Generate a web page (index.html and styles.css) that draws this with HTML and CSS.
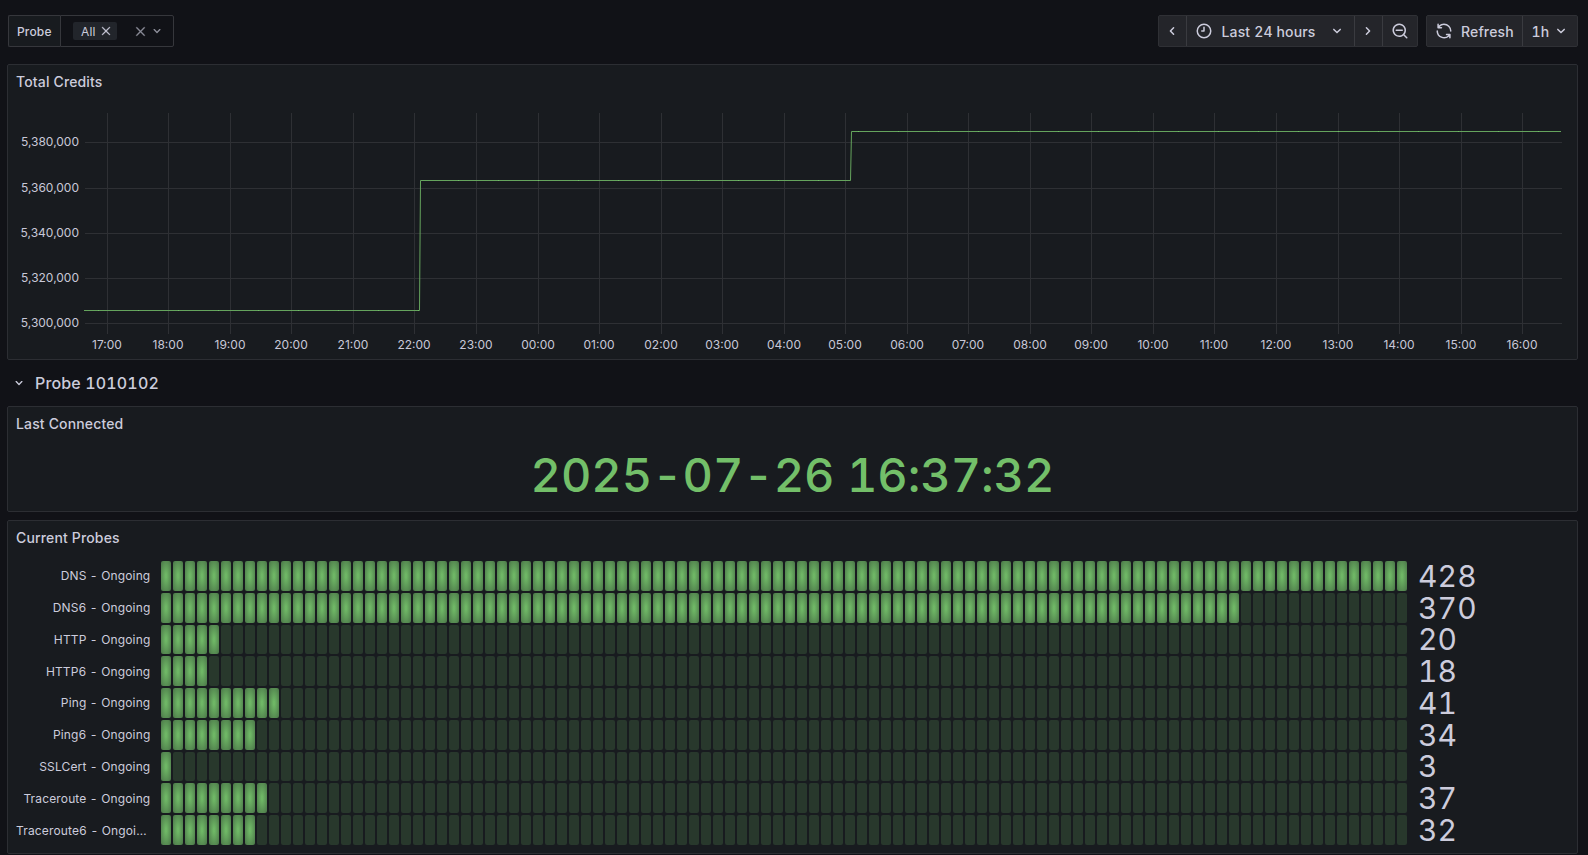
FILE: index.html
```html
<!DOCTYPE html>
<html lang="en">
<head>
<meta charset="utf-8">
<title>Probes dashboard</title>
<link rel="stylesheet" href="styles.css">
</head>
<body>
<svg class="sprite" aria-hidden="true">
  <symbol id="times" viewBox="0 0 24 24"><path d="M13.41,12l6.3-6.29a1,1,0,1,0-1.42-1.42L12,10.59,5.71,4.29A1,1,0,0,0,4.29,5.71L10.59,12l-6.3,6.29a1,1,0,0,0,0,1.42,1,1,0,0,0,1.42,0L12,13.41l6.29,6.3a1,1,0,0,0,1.42,0,1,1,0,0,0,0-1.42Z"/></symbol>
  <symbol id="down" viewBox="0 0 24 24"><path d="M17,9.17a1,1,0,0,0-1.41,0L12,12.71,8.46,9.17a1,1,0,0,0-1.41,0,1,1,0,0,0,0,1.42l4.24,4.24a1,1,0,0,0,1.42,0L17,10.59A1,1,0,0,0,17,9.17Z"/></symbol>
  <symbol id="left" viewBox="0 0 24 24"><path d="M11.29,12l3.54-3.54a1,1,0,0,0,0-1.41,1,1,0,0,0-1.42,0L9.17,11.29a1,1,0,0,0,0,1.42L13.41,17a1,1,0,0,0,.71.29,1,1,0,0,0,.71-.29,1,1,0,0,0,0-1.41Z"/></symbol>
  <symbol id="clock" viewBox="0 0 24 24"><path d="M12,2A10,10,0,1,0,22,12,10,10,0,0,0,12,2Zm0,18a8,8,0,1,1,8-8A8,8,0,0,1,12,20ZM12,6a1,1,0,0,0-1,1v4H9a1,1,0,0,0,0,2h3a1,1,0,0,0,1-1V7A1,1,0,0,0,12,6Z"/></symbol>
  <symbol id="zoomout" viewBox="0 0 24 24"><path d="M21.71,20.29,18,16.61A9,9,0,1,0,16.61,18l3.68,3.68a1,1,0,0,0,1.42,0A1,1,0,0,0,21.71,20.29ZM11,18a7,7,0,1,1,7-7A7,7,0,0,1,11,18Zm4-8H7a1,1,0,0,0,0,2h8a1,1,0,0,0,0-2Z"/></symbol>
  <symbol id="sync" viewBox="0 0 24 24"><path d="M19.91,15.51H15.38a1,1,0,0,0,0,2h2.4A8,8,0,0,1,4,12a1,1,0,1,0-2,0,10,10,0,0,0,16.88,7.23V21a1,1,0,0,0,2,0V16.5A1,1,0,0,0,19.91,15.51ZM12,2A10,10,0,0,0,5.12,4.77V3a1,1,0,0,0-2,0V7.5a1,1,0,0,0,1,1h4.5a1,1,0,0,0,0-2H6.22A8,8,0,0,1,20,12a1,1,0,0,0,2,0A10,10,0,0,0,12,2Z"/></symbol>
</svg>
<header class="toolbar">
  <div class="variable">
    <span class="variable-label">Probe</span>
    <div class="variable-select">
      <span class="pill">All<svg class="icon pill-x"><use href="#times"/></svg></span>
      <svg class="icon clear"><use href="#times"/></svg>
      <svg class="icon i16 open"><use href="#down"/></svg>
    </div>
  </div>
  <div class="group range">
    <button class="btn step prev"><svg class="icon i18"><use href="#left"/></svg></button>
    <button class="btn time"><svg class="icon i18"><use href="#clock"/></svg><span class="time-text">Last 24 hours</span><svg class="icon i18"><use href="#down"/></svg></button>
    <button class="btn step next"><svg class="icon i18 flip"><use href="#left"/></svg></button>
    <button class="btn zoom"><svg class="icon i18"><use href="#zoomout"/></svg></button>
  </div>
  <div class="group">
    <button class="btn refresh"><svg class="icon i18"><use href="#sync"/></svg><span>Refresh</span></button>
    <button class="btn interval"><span>1h</span><svg class="icon i18"><use href="#down"/></svg></button>
  </div>
</header>
<main>
  <section class="panel credits">
    <h2 class="title">Total Credits</h2>
    <svg class="chart" id="chart" width="1569" height="262" viewBox="8 97 1569 262"></svg>
  </section>
  <div class="row-header"><svg class="icon i16"><use href="#down"/></svg><span>Probe 1010102</span></div>
  <section class="panel connected">
    <h2 class="title">Last Connected</h2>
    <div class="stat">2025-07-26 16:37:32</div>
  </section>
  <section class="panel probes">
    <h2 class="title">Current Probes</h2>
    <div class="gauges" id="gauges"></div>
  </section>
</main>
<script src="app.js"></script>
</body>
</html>
```
FILE: styles.css
```css
* { box-sizing: border-box; }
body {
  margin: 0;
  height: 855px;
  overflow: hidden;
  background: #111217;
  color: #ccccdc;
  font-family: Inter, "Liberation Sans", sans-serif;
  font-size: 14px;
  font-variant-numeric: tabular-nums;
  letter-spacing: 0.15px;
}
.sprite { display: none; }
.icon { fill: currentColor; flex: none; display: block; }
.i16 { width: 16px; height: 16px; }
.i18 { width: 18px; height: 18px; }
.flip { transform: scaleX(-1); }

.toolbar { display: flex; height: 64px; padding: 15px 10px 0 8px; }
.variable { display: flex; height: 32px; margin-right: auto; font-size: 12px; }
.variable-label {
  width: 52px; display: flex; align-items: center; padding-left: 8px;
  background: #181b1f; border: 1px solid #36373c; border-right: 0;
  border-radius: 2px 0 0 2px; font-weight: 500;
}
.variable-select {
  width: 114px; display: flex; align-items: center; padding-left: 12px;
  border: 1px solid #36373c; border-radius: 0 2px 2px 0; color: #8e8f9b;
}
.pill {
  display: flex; align-items: center; width: 44px; height: 18px; padding-left: 8px;
  background: #22252b; border-radius: 2px; color: #ccccdc;
}
.pill-x { width: 12px; height: 12px; margin-left: 4px; stroke: currentColor; stroke-width: 0.6px; }
.clear { width: 13px; height: 13px; margin-left: 17px; stroke: currentColor; stroke-width: 0.6px; }
.open { margin-left: 2px; }

.group { display: flex; height: 32px; border: 1px solid #2f3035; border-radius: 2px; background: #24252a; }
.range { margin-right: 8px; }
.btn {
  display: flex; align-items: center; height: 30px; padding: 0; margin: 0;
  background: none; border: 0; border-right: 1px solid #3a3b40; color: #ccccdc;
  font: 500 14px Inter, sans-serif; font-variant-numeric: tabular-nums; letter-spacing: 0.15px;
}
.btn:last-child { border-right: 0; }
.step { width: 28px; padding-left: 4px; }
.time { width: 168px; padding: 0 8px; }
.time-text { margin: 0 auto 0 8.5px; }
.zoom { width: 34px; justify-content: center; }
.refresh { width: 96px; padding-left: 8px; gap: 8px; }
.interval { width: 54px; padding-left: 8.5px; gap: 2.5px; }

.panel {
  margin: 0 10px 0 7px; background: #181b1f;
  border: 1px solid #2c2e33; border-radius: 2px;
}
.title { margin: 0; height: 32px; padding-left: 8px; font-size: 14px; font-weight: 500; line-height: 34px; }
.credits { height: 296px; }
.chart { display: block; font-variant-numeric: normal; }
.chart text { font-size: 12px; fill: #c8c8d8; letter-spacing: 0; }
.grid-line { fill: #2e3034; }
.series { fill: none; stroke: #65a45d; }
.point { fill: #73bf69; }
.row-header {
  height: 46px; display: flex; align-items: center; gap: 8px; padding: 0 0 0 11px;
  font-size: 16px; font-weight: 500;
}
.connected { height: 106px; margin-bottom: 8px; }
.stat {
  height: 72px; display: flex; align-items: center; justify-content: center;
  color: #73bf69; font-size: 47px; font-weight: 500; line-height: 72px; letter-spacing: -0.07px;
}
.probes { height: 334px; }
.gauges { display: grid; grid-template-rows: repeat(9, 1fr); gap: 2px; height: 284px; margin: 8px 8px 0; }
.gauge { display: grid; grid-template-columns: 134.4px 1246px 1fr; column-gap: 10.6px; align-items: center; min-height: 0; }
.gauge-label { font-size: 12px; text-align: right; white-space: nowrap; overflow: hidden; text-overflow: ellipsis; }
.cells { display: flex; gap: 2px; height: 100%; }
.cell { width: 10px; border-radius: 2px; background: rgba(115, 191, 105, 0.18); }
.cell.lit { background: radial-gradient(rgba(115, 191, 105, 0.95) 10%, rgba(115, 191, 105, 0.55)); }
.value { height: 28px; margin: -0.3px 0 0 0.4px; font-size: 30px; line-height: 28px; }
```
FILE: app.js
```js
const CELLS = 104;
const probes = [
  ['DNS - Ongoing', 428], ['DNS6 - Ongoing', 370], ['HTTP - Ongoing', 20],
  ['HTTP6 - Ongoing', 18], ['Ping - Ongoing', 41], ['Ping6 - Ongoing', 34],
  ['SSLCert - Ongoing', 3], ['Traceroute - Ongoing', 37], ['Traceroute6 - Ongoing', 32]
];
document.getElementById('gauges').innerHTML = probes.map(([name, value]) => {
  const lit = Math.max(1, Math.round(value / 428 * CELLS));
  let cells = '';
  for (let i = 0; i < CELLS; i++) cells += `<span class="cell${i < lit ? ' lit' : ''}"></span>`;
  return `<div class="gauge"><span class="gauge-label">${name}</span><div class="cells">${cells}</div><span class="value">${value}</span></div>`;
}).join('');

let out = '';
[[142, '5,380,000'], [188, '5,360,000'], [233, '5,340,000'], [278, '5,320,000'], [323, '5,300,000']].forEach(([y, t]) => {
  out += `<rect class="grid-line" x="85" y="${y}" width="1477" height="1"/><text x="79" y="${y + 4}" text-anchor="end">${t}</text>`;
});
for (let i = 0; i < 24; i++) {
  const x = Math.round(106.7 + i * 61.543);
  const hour = String((17 + i) % 24).padStart(2, '0');
  out += `<rect class="grid-line" x="${x}" y="113" width="1" height="221"/><text x="${x}" y="349" text-anchor="middle">${hour}:00</text>`;
}
out += '<path class="series" d="M84 310.5H419.5L420.5 180.5H850.5L851.5 131.5H1561"/>';
for (let x = 98; x < 1561; x += 40) {
  const y = x < 420 ? 310 : x < 851 ? 180 : 131;
  out += `<rect class="point" x="${x}" y="${y}" width="1" height="1"/>`;
}
document.getElementById('chart').innerHTML = out;
```
